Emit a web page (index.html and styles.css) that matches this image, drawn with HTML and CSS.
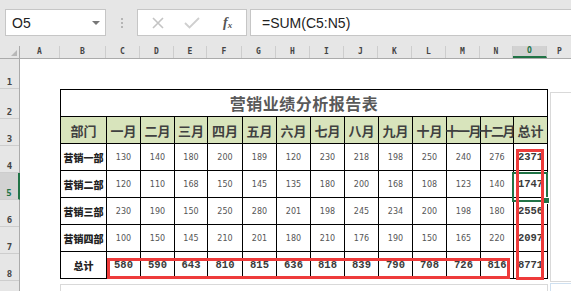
FILE: index.html
```html
<!DOCTYPE html>
<html lang="zh-CN">
<head>
  <meta charset="UTF-8">
  <title>营销业绩分析报告表</title>
  <link rel="stylesheet" href="styles.css">
</head>
<body>

  <!-- 编辑栏 -->
  <div class="toolbar">
    <div class="namebox">
      <span>O5</span>
      <span class="caret"></span>
    </div>
    <div class="grip"><i></i><i></i><i></i></div>
    <div class="fxbtns">
      <svg class="btn-x" width="12" height="12" viewBox="0 0 12 12"><path d="M1 1L11 11M11 1L1 11" stroke="#c4c4c4" stroke-width="1.6" fill="none"/></svg>
      <svg class="btn-ok" width="16" height="12" viewBox="0 0 16 12"><path d="M1 6L5.5 10.5L15 1" stroke="#cfcfcf" stroke-width="1.8" fill="none"/></svg>
      <span class="btn-fx">f<sub>x</sub></span>
    </div>
    <div class="formula">=SUM(C5:N5)</div>
  </div>

  <!-- 工作表 -->
  <div class="sheet">
    <div class="corner"><span></span></div>
    <div class="col-heads" id="colHeads"></div>
    <div class="row-heads" id="rowHeads"></div>

    <div class="canvas">
      <table class="report">
        <colgroup id="cols"></colgroup>
        <tr class="title-row"><td colspan="14">营销业绩分析报告表</td></tr>
        <tr class="head-row" id="headRow"></tr>
        <tbody id="body"></tbody>
      </table>

      <div class="float-box float-right"></div>
      <div class="float-box float-bottom"></div>
      <div class="float-box float-corner"></div>

      <div class="select-box"></div>
      <div class="mark mark-total"></div>
      <div class="mark mark-sum"></div>
    </div>
  </div>

  <script>
    // 列宽（B..O）
    const colWidths = [46, 34, 34, 33, 35, 34, 34, 34, 34, 34, 34, 34, 33, 34];
    const letters = "ABCDEFGHIJKLMNOP".split("");
    const rowHeights = [30, 30, 27, 27, 27, 27, 27, 27, 20];

    const months = ["一月","二月","三月","四月","五月","六月","七月","八月","九月","十月","十一月","十二月"];
    const data = [
      { name: "营销一部", values: [130,140,180,200,189,120,230,218,198,250,240,276] },
      { name: "营销二部", values: [120,110,168,150,145,135,180,200,168,108,123,140] },
      { name: "营销三部", values: [230,190,150,250,280,201,198,245,234,200,198,180] },
      { name: "营销四部", values: [100,150,145,210,201,180,210,176,190,150,165,220] }
    ];

    // 列标题
    const colHeads = document.getElementById("colHeads");
    [40].concat(colWidths).forEach((w, i) => {
      const c = document.createElement("div");
      c.className = "col-head" + (letters[i] === "O" ? " active" : "");
      c.style.width = w + "px";
      c.textContent = letters[i];
      colHeads.appendChild(c);
    });
    const p = document.createElement("div");
    p.className = "col-head rest";
    p.textContent = "P";
    colHeads.appendChild(p);

    // 行标题（第 9 行只露出上沿，不显示行号）
    const rowHeads = document.getElementById("rowHeads");
    rowHeights.forEach((h, i) => {
      const r = document.createElement("div");
      r.className = "row-head" + (i === 4 ? " active" : "");
      r.style.height = h + "px";
      if (i < 8) r.textContent = i + 1;
      rowHeads.appendChild(r);
    });

    const cols = document.getElementById("cols");
    colWidths.forEach(w => {
      const c = document.createElement("col");
      c.style.width = w + "px";
      cols.appendChild(c);
    });

    const headRow = document.getElementById("headRow");
    headRow.innerHTML = "<td>部门</td>" +
      months.map(m => `<td${m.length > 2 ? ' class="long"' : ""}>${m}</td>`).join("") +
      "<td>总计</td>";

    const body = document.getElementById("body");
    const totals = new Array(12).fill(0);
    data.forEach(d => {
      const sum = d.values.reduce((a, b) => a + b, 0);
      d.values.forEach((v, i) => totals[i] += v);
      const tr = document.createElement("tr");
      tr.innerHTML = `<td class="dept">${d.name}</td>` +
        d.values.map(v => `<td class="num">${v}</td>`).join("") +
        `<td class="sum">${sum}</td>`;
      body.appendChild(tr);
    });
    const grand = totals.reduce((a, b) => a + b, 0);
    const tr = document.createElement("tr");
    tr.innerHTML = `<td class="dept">总计</td>` +
      totals.map(v => `<td class="sum">${v}</td>`).join("") +
      `<td class="sum">${grand}</td>`;
    body.appendChild(tr);
  </script>

</body>
</html>
```

FILE: styles.css
```css
* {
  margin: 0;
  padding: 0;
  box-sizing: border-box;
}

body {
  width: 571px;
  height: 291px;
  overflow: hidden;
  background: #fff;
  font-family: "Liberation Sans", Arial, sans-serif;
  color: #333;
}

/* 编辑栏 */
.toolbar {
  height: 46px;
  background: #e6e6e6;
  display: flex;
  align-items: flex-start;
  padding: 9px 0 0 5px;
}

.namebox {
  width: 101px;
  height: 27px;
  background: #fff;
  border: 1px solid #c6c6c6;
  display: flex;
  align-items: center;
  justify-content: space-between;
  padding: 0 5px 0 6px;
  font-size: 14px;
  color: #222;
}

.caret {
  width: 0;
  height: 0;
  border-left: 4px solid transparent;
  border-right: 4px solid transparent;
  border-top: 4px solid #777;
  margin-top: 1px;
}

.grip {
  width: 31px;
  height: 27px;
  display: flex;
  flex-direction: column;
  align-items: center;
  justify-content: center;
  gap: 2px;
}

.grip i {
  width: 2px;
  height: 2px;
  background: #b5b5b5;
}

.fxbtns {
  width: 110px;
  height: 27px;
  background: #fff;
  border: 1px solid #c6c6c6;
  display: flex;
  align-items: center;
  padding-left: 14px;
}

.btn-x {
  margin-right: 20px;
}

.btn-ok {
  margin-right: 23px;
}

.btn-fx {
  font-family: "Liberation Serif", serif;
  font-style: italic;
  font-weight: bold;
  font-size: 14px;
  color: #555;
}

.btn-fx sub {
  font-size: 9px;
  vertical-align: -1px;
}

.formula {
  flex: 1;
  height: 27px;
  margin-left: 3px;
  background: #fff;
  border: 1px solid #c6c6c6;
  border-right: none;
  padding-left: 11px;
  display: flex;
  align-items: center;
  font-size: 14px;
  color: #222;
}

/* 工作表 */
.sheet {
  display: grid;
  grid-template-columns: 20px 1fr;
  grid-template-rows: 13px 1fr;
  height: 245px;
}

.corner {
  background: #e6e6e6;
  border-right: 1px solid #ababab;
  border-bottom: 1px solid #ababab;
  position: relative;
}

.corner span {
  position: absolute;
  right: 2px;
  bottom: 2px;
  width: 0;
  height: 0;
  border-left: 6px solid transparent;
  border-bottom: 6px solid #b8b8b8;
}

.col-heads {
  display: flex;
  background: #e6e6e6;
  border-bottom: 1px solid #ababab;
}

.col-head {
  flex: none;
  border-right: 1px solid #cdcdcd;
  font-family: "DejaVu Sans Mono", monospace;
  font-weight: bold;
  font-size: 8px;
  color: #444;
  text-align: center;
  line-height: 12px;
}

.col-head.rest {
  flex: 1;
  text-align: left;
  padding-left: 10px;
  border-right: none;
}

.col-head.active {
  background: #d2d2d2;
  color: #217346;
  border-bottom: 2px solid #217346;
  line-height: 10px;
}

.row-heads {
  display: flex;
  flex-direction: column;
  background: #e6e6e6;
  border-right: 1px solid #ababab;
}

.row-head {
  flex: none;
  border-bottom: 1px solid #cdcdcd;
  display: flex;
  align-items: flex-end;
  justify-content: center;
  padding-bottom: 1px;
  font-family: "DejaVu Sans Mono", monospace;
  font-weight: bold;
  font-size: 9px;
  color: #444;
}

.row-head.active {
  background: #d2d2d2;
  color: #217346;
  border-right: 2px solid #217346;
  margin-right: -1px;
}

.canvas {
  position: relative;
  overflow: hidden;
  padding: 30px 0 0 40px;
}

/* 报告表 */
.report {
  border-collapse: collapse;
  table-layout: fixed;
  width: 487px;
  border: 1.5px solid #000;
}

.report td {
  border: 1px solid #000;
  text-align: center;
  vertical-align: middle;
  white-space: nowrap;
  padding: 0;
  overflow: visible;
}

.title-row td {
  height: 30px;
  font-family: "Noto Sans CJK SC", sans-serif;
  font-weight: bold;
  font-size: 16px;
  color: #595959;
  letter-spacing: 0.5px;
}

.head-row td {
  height: 27px;
  background: #d8e4bc;
  font-family: "Noto Sans CJK SC", sans-serif;
  font-weight: bold;
  font-size: 13px;
  color: #404040;
}

.head-row td.long {
  letter-spacing: -1.5px;
  text-indent: -1.5px;
}

.report tbody td {
  height: 27px;
}

.dept {
  font-family: "Noto Sans CJK SC", sans-serif;
  font-weight: 900;
  font-size: 10px;
  color: #222;
}

.num {
  font-family: "DejaVu Sans", sans-serif;
  font-size: 8px;
  color: #555;
}

.sum {
  font-family: "Liberation Mono", monospace;
  font-weight: bold;
  font-size: 10.5px;
  color: #3a3a3a;
}

/* 浮动对象与标记 */
.float-box {
  position: absolute;
  border: 1px solid #d9d9d9;
}

.float-right {
  left: 530px;
  top: 33px;
  width: 60px;
  height: 190px;
}

.float-bottom {
  left: 40px;
  top: 225px;
  width: 488px;
  height: 20px;
}

.float-corner {
  left: 530px;
  top: 224px;
  width: 60px;
  height: 20px;
  border-color: #cfe0f0;
}

.select-box {
  position: absolute;
  left: 492px;
  top: 113px;
  width: 36px;
  height: 30px;
  border: 2px solid #217346;
}

.select-box::after {
  content: "";
  position: absolute;
  right: -4px;
  bottom: -4px;
  width: 5px;
  height: 5px;
  background: #217346;
  border: 1px solid #fff;
}

.mark {
  position: absolute;
  border: 3px solid #ee3b3b;
}

.mark-total {
  left: 87px;
  top: 199px;
  width: 403px;
  height: 21px;
}

.mark-sum {
  left: 496px;
  top: 90px;
  width: 28px;
  height: 131px;
}
```
